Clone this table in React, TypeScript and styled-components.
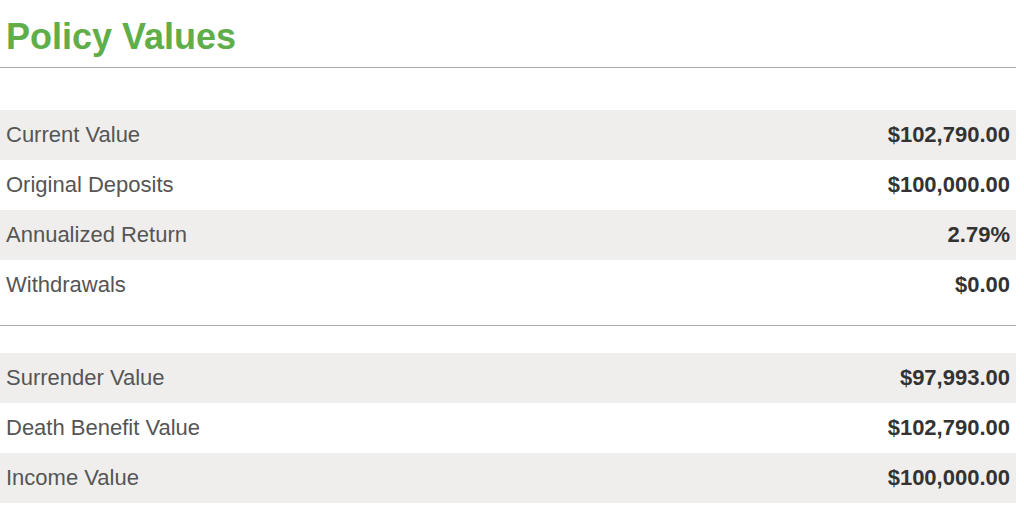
import React from "react";
import styled, { createGlobalStyle } from "styled-components";

const Global = createGlobalStyle`
  html, body { margin: 0; padding: 0; background: #ffffff; }
  body { font-family: "Liberation Sans", Arial, sans-serif; }
`;

const Page = styled.div`
  width: 1016px;
`;

const Header = styled.header`
  padding: 16px 6px 9px;
  border-bottom: 1px solid #aaaaaa;
`;

const Title = styled.h1`
  margin: 0;
  font-size: 36px;
  line-height: 42px;
  font-weight: 700;
  color: #5fae4a;
`;

const Section = styled.section<{ $top: number; $divider?: boolean }>`
  padding-top: ${(p) => p.$top}px;
  padding-bottom: ${(p) => (p.$divider ? 15 : 0)}px;
  border-bottom: ${(p) => (p.$divider ? "1px solid #aaaaaa" : "none")};
`;

const Row = styled.div<{ $shade: boolean }>`
  display: flex;
  justify-content: space-between;
  align-items: center;
  height: 50px;
  padding: 0 6px;
  background: ${(p) => (p.$shade ? "#efeeed" : "#ffffff")};
  font-size: 22px;
  line-height: 50px;
`;

const Label = styled.span`
  color: #555555;
`;

const Value = styled.span`
  color: #333333;
  font-weight: 700;
`;

type Item = { label: string; value: string };

const first: Item[] = [
  { label: "Current Value", value: "$102,790.00" },
  { label: "Original Deposits", value: "$100,000.00" },
  { label: "Annualized Return", value: "2.79%" },
  { label: "Withdrawals", value: "$0.00" },
];

const second: Item[] = [
  { label: "Surrender Value", value: "$97,993.00" },
  { label: "Death Benefit Value", value: "$102,790.00" },
  { label: "Income Value", value: "$100,000.00" },
];

const Rows = ({ items }: { items: Item[] }) => (
  <>
    {items.map((it, i) => (
      <Row key={it.label} $shade={i % 2 === 0}>
        <Label>{it.label}</Label>
        <Value>{it.value}</Value>
      </Row>
    ))}
  </>
);

export default function App() {
  return (
    <Page>
      <Global />
      <Header>
        <Title>Policy Values</Title>
      </Header>
      <Section $top={42} $divider>
        <Rows items={first} />
      </Section>
      <Section $top={27}>
        <Rows items={second} />
      </Section>
    </Page>
  );
}
